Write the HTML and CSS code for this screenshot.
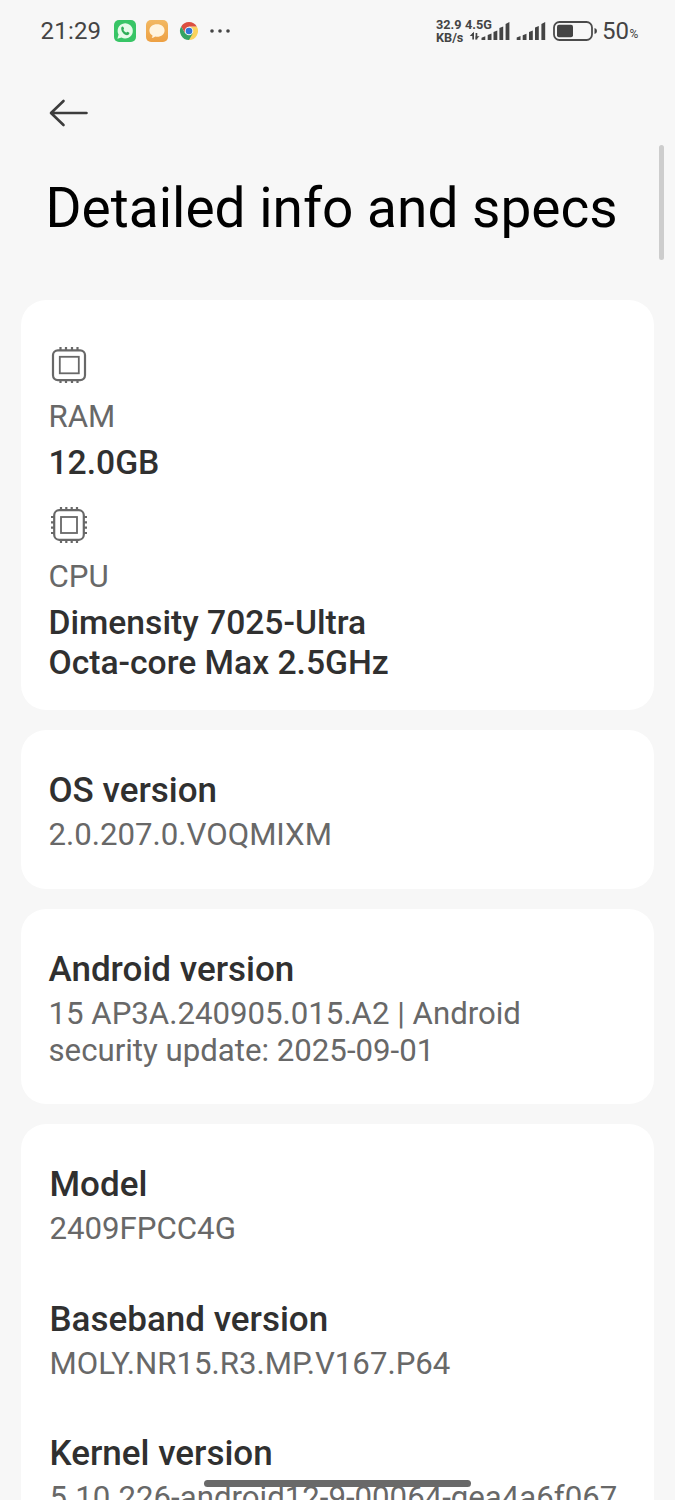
FILE: index.html
```html
<!DOCTYPE html>
<html lang="en">
<head>
<meta charset="utf-8">
<title>Detailed info and specs</title>
<link rel="stylesheet" href="styles.css">
</head>
<body>
<div class="screen">
  <div class="status">
    <span class="clock">21:29</span>
    <svg class="app whatsapp" viewBox="0 0 22 22"><rect width="22" height="22" rx="5" fill="#38c566"/><path d="M3.4 18.8l1.2-4.2a7.6 7.6 0 1 1 2.9 2.9z" fill="#e6fbe9"/><path d="M7.4 7.300c.7-1.100 1.700-1 2.100 0l.5 1.300c.2.5-.7 1.100-.6 1.500.6 1.200 1.500 2 2.600 2.500.5.2 1-.9 1.500-.8l1.500.8c1 .5.1 2.200-1.100 2.500-3.300.7-7.600-3.700-6.500-7.800z" fill="#2fae58"/></svg>
    <svg class="app messages" viewBox="0 0 22 22"><defs><linearGradient id="amber" x2="0" y2="1"><stop stop-color="#f2b862"/><stop offset="1" stop-color="#eda043"/></linearGradient></defs><rect width="22" height="22" rx="5" fill="url(#amber)"/><path d="M11 4.200c4.500 0 7.600 2.700 7.600 6.300s-3.100 6.300-7.600 6.300c-.6 0-1.200 0-1.800-.2-1 .9-2.200 1.300-3.500 1.400.6-.7.8-1.400.8-2.400-2-1.200-3.100-2.900-3.100-5.100 0-3.600 3.100-6.300 7.600-6.300z" fill="#fff4df"/></svg>
    <svg class="chrome" viewBox="0 0 18 18"><path d="M9 9L16.800 4.500A9 9 0 0 1 9 18z" fill="#fbd35e"/><path d="M9 4.500h7.800L12.900 11.200z" fill="#fbd35e"/><path d="M9 4.500h7.800A9 9 0 0 0 1.200 4.500l3.900 6.700z" fill="#dc4f41"/><path d="M1.200 4.500A9 9 0 0 0 9 18l3.900-6.700H5.100z" fill="#35a363"/><circle cx="9" cy="9" r="4.300" fill="#f7f7f7"/><circle cx="9" cy="9" r="3.300" fill="#3275d8"/></svg>
    <svg class="more" viewBox="0 0 20 4"><circle cx="2" cy="2" r="1.800"/><circle cx="10" cy="2" r="1.800"/><circle cx="18" cy="2" r="1.800"/></svg>
    <div class="network">
      <div class="rate"><span>32.9</span><span>4.5G</span></div>
      <span class="unit">KB/s</span>
    </div>
    <svg class="signals" viewBox="0 0 77 20">
      <path d="M2.300 12h1.700v6.500H2.300zM5.600 12h1.700v6.500H5.600z"/><path d="M-.3 15l4.300-4.300V15zM5.600 18.800v-3.600h4z"/>
      <path d="M11.500 19v-2.200l3.800-1.600V19zM17.700 19v-5l3.800-1.500V19zM23.500 19v-8l3.800-1.500V19zM29.400 19V7l3.800-1.500V19zM35.600 19V3l3.800-2v18z"/>
      <path d="M46.700 19v-2.500l3.800-1.500v4zM52.700 19v-4.700l3.800-1.600V19zM59 19v-8l3.800-1.500V19zM65 19V6.500L68.800 5v14zM71.400 19V3L75.200 1v18z"/>
    </svg>
    <svg class="battery" viewBox="0 0 45 20"><rect x="1" y="1" width="38" height="18" rx="5.500" fill="none" stroke="#4b4b4b" stroke-width="1.800"/><rect x="4" y="3.700" width="16" height="12.600" rx="2"/><path d="M41.500 7q2.500.3 2.500 3t-2.500 3z"/></svg>
    <span class="level">50</span><span class="percent">%</span>
  </div>
  <svg class="back" viewBox="0 0 40 28"><path d="M14.500 2L2 14l12.500 12M2.500 14H37.500"/></svg>
  <h1>Detailed info and specs</h1>
  <main>
    <section class="card hardware">
      <svg class="chip" viewBox="0 0 36 36"><rect x="2" y="3.300" width="32" height="29.800" rx="4.800" stroke-width="2.200"/><rect x="8.800" y="9.800" width="19" height="16.500"/><path d="M9.500 0v3M15 0v3M21 0v3M26.500 0v3M9.500 33v3M15 33v3M21 33v3M26.500 33v3" stroke-width="2.200"/></svg>
      <div class="detail">RAM</div>
      <div class="name value">12.0GB</div>
      <svg class="chip second" viewBox="0 0 36 36"><rect x="3.200" y="3.200" width="29.600" height="29.600" rx="5" stroke-width="2.200"/><rect x="10" y="10" width="16" height="16"/><path d="M10 0v3M15.300 0v3M20.700 0v3M26 0v3M10 33v3M15.300 33v3M20.700 33v3M26 33v3M0 10h3M0 15.300h3M0 20.700h3M0 26h3M33 10h3M33 15.300h3M33 20.700h3M33 26h3" stroke-width="2.200"/></svg>
      <div class="detail">CPU</div>
      <div class="name value cpu">Dimensity 7025-Ultra<br>Octa-core Max 2.5GHz</div>
    </section>
    <section class="card">
      <div class="name">OS version</div>
      <div class="detail">2.0.207.0.VOQMIXM</div>
    </section>
    <section class="card">
      <div class="name">Android version</div>
      <div class="detail">15 AP3A.240905.015.A2 | Android<br>security update: 2025-09-01</div>
    </section>
    <section class="card list">
      <div class="item"><div class="name">Model</div><div class="detail">2409FPCC4G</div></div>
      <div class="item"><div class="name">Baseband version</div><div class="detail">MOLY.NR15.R3.MP.V167.P64</div></div>
      <div class="item"><div class="name">Kernel version</div><div class="detail">5.10.226-android12-9-00064-gea4a6f067</div></div>
    </section>
  </main>
  <div class="scrollbar"></div>
  <div class="homebar"></div>
</div>
</body>
</html>
```
FILE: styles.css
```css
body { margin: 0; background: #f7f7f7; font-family: Roboto, sans-serif; }
.screen { position: relative; width: 675px; height: 1500px; overflow: hidden; background: #f7f7f7; }
.status { display: flex; align-items: center; height: 62px; padding-left: 40.500px; color: #444; fill: #444; }
.status svg { flex: none; overflow: visible; }
.clock { width: 73px; font-size: 24px; letter-spacing: 0.200px; }
.app { width: 22px; height: 22px; margin-right: 10px; }
.chrome { width: 18px; height: 18px; margin-left: 2px; }
.more { width: 20px; height: 4px; margin-left: 12.500px; }
.network { width: 58px; margin-left: 206px; font-size: 12.700px; line-height: 13px; font-weight: 700; white-space: nowrap; }
.rate { display: flex; gap: 3.500px; }
.unit { display: block; }
.signals { width: 77px; height: 20px; margin-left: -24.500px; }
.battery { width: 45px; height: 20px; margin-left: 6px; }
.level { margin-left: 4.500px; font-size: 24px; }
.percent { margin: 6px 0 0 0.500px; font-size: 12px; }
.back { display: block; width: 40px; height: 28px; margin: 37px 0 0 48.500px; fill: none; stroke: #3d3d3d; stroke-width: 2.600; stroke-linecap: round; stroke-linejoin: round; }
h1 { margin: 49px 0 60px 45.500px; font-size: 55px; line-height: 64px; font-weight: 400; white-space: nowrap; color: #000; }
main { display: flex; flex-direction: column; gap: 20px; margin: 0 21px; }
.card { box-sizing: border-box; padding: 41px 27.500px 35.500px; border-radius: 25px; background: #fff; }
.hardware { padding: 47px 27.500px 27px; }
.chip { display: block; width: 36px; height: 36px; margin: 0 0 14.500px 2.500px; fill: none; stroke: #686868; stroke-width: 1.800; }
.second { margin-top: 24px; }
.name { font-size: 35px; line-height: 40px; font-weight: 500; color: #303030; white-space: nowrap; }
.detail { margin-top: 5px; font-size: 31.200px; line-height: 37px; color: #686868; white-space: nowrap; }
.hardware .detail { margin-top: 0; }
.value { margin-top: 8.500px; font-size: 33.650px; }
.list { display: flex; flex-direction: column; gap: 52.500px; height: 500px; padding-left: 28.500px; }
.scrollbar { position: absolute; left: 659px; top: 145px; width: 5px; height: 115px; border-radius: 3px; background: #cdcdcd; }
.homebar { position: absolute; left: 204px; top: 1480px; width: 267px; height: 7px; border-radius: 4px; background: #696969; }
```
